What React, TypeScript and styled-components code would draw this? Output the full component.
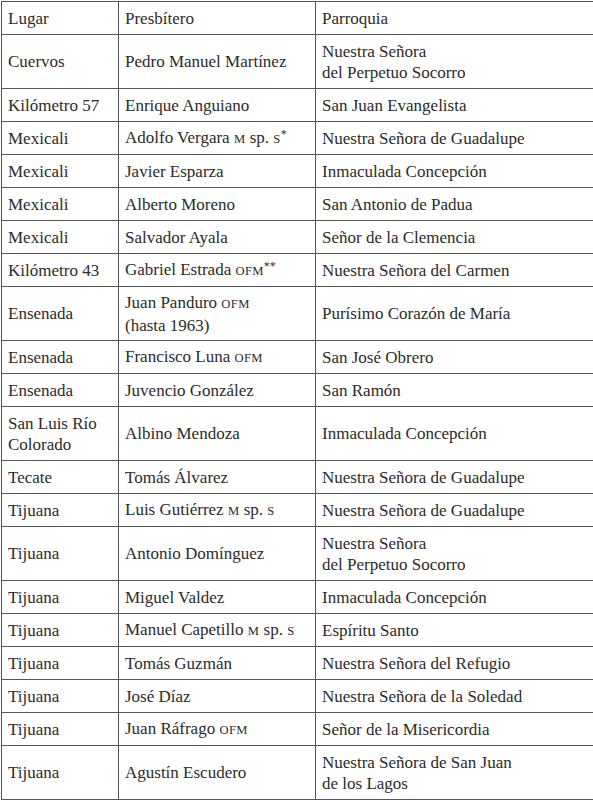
import React from "react";
import styled, { createGlobalStyle } from "styled-components";

const Global = createGlobalStyle`
  html, body { margin: 0; padding: 0; background: #ffffff; }
  body { font-family: "Liberation Serif", "DejaVu Serif", serif; }
`;

const Page = styled.div`
  padding: 1px 0 0 1px;
`;

const Table = styled.table`
  border-collapse: collapse;
  width: 592px;
  table-layout: fixed;
  color: #2b2b2b;
  font-size: 17px;
  line-height: 21px;
`;

const Col = styled.col<{ $w: number }>`
  width: ${(p) => p.$w}px;
`;

const Row = styled.tr<{ $double?: boolean }>`
  height: ${(p) => (p.$double ? 54 : 33)}px;
`;

const Cell = styled.td`
  border: 1px solid #555555;
  padding: 0 6px;
  vertical-align: middle;
  text-align: left;
  font-weight: normal;
  font-family: "Liberation Serif", "DejaVu Serif", serif;
`;

const Sc = styled.span`
  font-size: 0.74em;
  letter-spacing: 0.03em;
`;

const Sup = styled.sup`
  font-size: 0.7em;
  line-height: 0;
  vertical-align: 0.45em;
`;

type Entry = { lugar: React.ReactNode; pres: React.ReactNode; parr: React.ReactNode; double?: boolean };

const OFM = () => <Sc>OFM</Sc>;
const MSPS = () => (
  <>
    <Sc>M</Sc> sp. <Sc>S</Sc>
  </>
);

const rows: Entry[] = [
  { lugar: "Cuervos", pres: "Pedro Manuel Martínez", parr: <>Nuestra Señora<br />del Perpetuo Socorro</>, double: true },
  { lugar: "Kilómetro 57", pres: "Enrique Anguiano", parr: "San Juan Evangelista" },
  { lugar: "Mexicali", pres: <>Adolfo Vergara <MSPS /><Sup>*</Sup></>, parr: "Nuestra Señora de Guadalupe" },
  { lugar: "Mexicali", pres: "Javier Esparza", parr: "Inmaculada Concepción" },
  { lugar: "Mexicali", pres: "Alberto Moreno", parr: "San Antonio de Padua" },
  { lugar: "Mexicali", pres: "Salvador Ayala", parr: "Señor de la Clemencia" },
  { lugar: "Kilómetro 43", pres: <>Gabriel Estrada <OFM /><Sup>**</Sup></>, parr: "Nuestra Señora del Carmen" },
  { lugar: "Ensenada", pres: <>Juan Panduro <OFM /><br />(hasta 1963)</>, parr: "Purísimo Corazón de María", double: true },
  { lugar: "Ensenada", pres: <>Francisco Luna <OFM /></>, parr: "San José Obrero" },
  { lugar: "Ensenada", pres: "Juvencio González", parr: "San Ramón" },
  { lugar: <>San Luis Río<br />Colorado</>, pres: "Albino Mendoza", parr: "Inmaculada Concepción", double: true },
  { lugar: "Tecate", pres: "Tomás Álvarez", parr: "Nuestra Señora de Guadalupe" },
  { lugar: "Tijuana", pres: <>Luis Gutiérrez <MSPS /></>, parr: "Nuestra Señora de Guadalupe" },
  { lugar: "Tijuana", pres: "Antonio Domínguez", parr: <>Nuestra Señora<br />del Perpetuo Socorro</>, double: true },
  { lugar: "Tijuana", pres: "Miguel Valdez", parr: "Inmaculada Concepción" },
  { lugar: "Tijuana", pres: <>Manuel Capetillo <MSPS /></>, parr: "Espíritu Santo" },
  { lugar: "Tijuana", pres: "Tomás Guzmán", parr: "Nuestra Señora del Refugio" },
  { lugar: "Tijuana", pres: "José Díaz", parr: "Nuestra Señora de la Soledad" },
  { lugar: "Tijuana", pres: <>Juan Ráfrago <OFM /></>, parr: "Señor de la Misericordia" },
  { lugar: "Tijuana", pres: "Agustín Escudero", parr: <>Nuestra Señora de San Juan<br />de los Lagos</>, double: true },
];

export default function App() {
  return (
    <Page>
      <Global />
      <Table>
        <colgroup>
          <Col $w={117} />
          <Col $w={197} />
          <Col $w={278} />
        </colgroup>
        <thead>
          <Row>
            <Cell as="th">Lugar</Cell>
            <Cell as="th">Presbítero</Cell>
            <Cell as="th">Parroquia</Cell>
          </Row>
        </thead>
        <tbody>
          {rows.map((r, i) => (
            <Row key={i} $double={r.double}>
              <Cell>{r.lugar}</Cell>
              <Cell>{r.pres}</Cell>
              <Cell>{r.parr}</Cell>
            </Row>
          ))}
        </tbody>
      </Table>
    </Page>
  );
}
